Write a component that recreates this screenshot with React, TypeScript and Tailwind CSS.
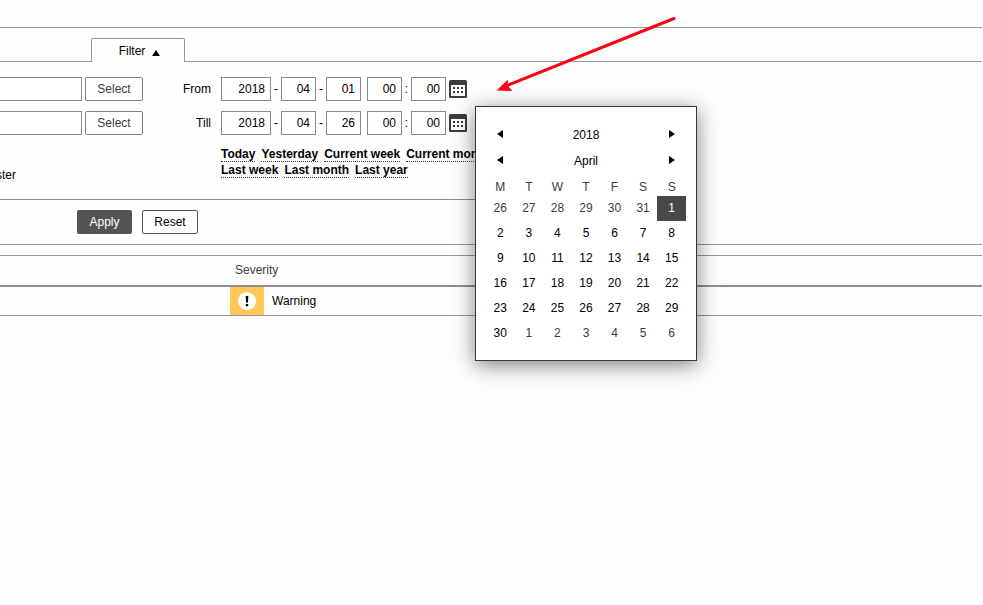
const quickRanges = [
  ["Today", "Yesterday", "Current week", "Current month"],
  ["Last week", "Last month", "Last year"],
];

const weekdays = ["M", "T", "W", "T", "F", "S", "S"];

const weeks = [
  [26, 27, 28, 29, 30, 31, 1],
  [2, 3, 4, 5, 6, 7, 8],
  [9, 10, 11, 12, 13, 14, 15],
  [16, 17, 18, 19, 20, 21, 22],
  [23, 24, 25, 26, 27, 28, 29],
  [30, 1, 2, 3, 4, 5, 6],
];

function CalendarIcon() {
  return (
    <svg width="18" height="18" viewBox="0 0 18 18" aria-hidden="true">
      <rect width="18" height="18" rx="1.5" fill="#3c3c3c" />
      <rect x="2" y="5" width="14" height="11" fill="#fff" />
      {[4, 8, 12].map((x) =>
        [7, 11].map((y) => <rect key={`${x}-${y}`} x={x} y={y} width="2" height="2" fill="#3c3c3c" />),
      )}
    </svg>
  );
}

function SelectRow({ label }: { label: string }) {
  return (
    <div className="flex gap-[3px]">
      <input
        aria-label={label}
        className="h-6 w-[82px] border border-l-0 border-[#8a8a8a] bg-white px-1 outline-none"
      />
      <button className="h-6 w-[58px] rounded-xs border border-[#7f7f7f] bg-white text-[#3c3c3c]">
        Select
      </button>
    </div>
  );
}

function DateField({ label, value, wide }: { label: string; value: string; wide?: boolean }) {
  return (
    <input
      aria-label={label}
      defaultValue={value}
      className={`h-6 border border-[#8a8a8a] bg-white px-[5px] text-right outline-none ${
        wide ? "w-[50px]" : "w-[35px]"
      }`}
    />
  );
}

function DateRow({ label, day }: { label: string; day: string }) {
  const id = label.toLowerCase();
  return (
    <div className="flex h-6 items-center">
      <span id={id} className="mr-[10px] w-[68px] text-right">
        {label}
      </span>
      <div role="group" aria-labelledby={id} className="flex items-center">
        <DateField label={`${label} year`} value="2018" wide />
        <span className="w-[10px] text-center">-</span>
        <DateField label={`${label} month`} value="04" />
        <span className="w-[10px] text-center">-</span>
        <DateField label={`${label} day`} value={day} />
        <span className="w-[6px]" />
        <DateField label={`${label} hour`} value="00" />
        <span className="w-[9px] text-center">:</span>
        <DateField label={`${label} minute`} value="00" />
        <button aria-label={`${label} calendar`} className="ml-[3px]">
          <CalendarIcon />
        </button>
      </div>
    </div>
  );
}

function Stepper({ label, value }: { label: string; value: string }) {
  return (
    <div className="flex h-[26px] items-center justify-between">
      <button aria-label={`Previous ${label}`} className="flex w-7 justify-center pb-[2px]">
        <svg width="6" height="8" viewBox="0 0 6 8" aria-hidden="true">
          <path d="M6 0v8L0 4z" />
        </svg>
      </button>
      <span>{value}</span>
      <button aria-label={`Next ${label}`} className="flex w-7 justify-center pb-[2px]">
        <svg width="6" height="8" viewBox="0 0 6 8" aria-hidden="true">
          <path d="M0 0v8l6-4z" />
        </svg>
      </button>
    </div>
  );
}

function Calendar() {
  return (
    <div className="absolute top-[106px] left-[475px] w-[222px] border border-[#383838] bg-white px-[10px] pt-[15px] pb-[14px] shadow-[0_4px_20px_rgba(0,0,0,0.5)]">
      <Stepper label="year" value="2018" />
      <Stepper label="month" value="April" />
      <table className="w-full table-fixed border-collapse text-center">
        <thead>
          <tr className="h-[22px] text-[#3c3c3c]">
            {weekdays.map((day, i) => (
              <th key={i} className="p-0 pt-1 font-normal">
                {day}
              </th>
            ))}
          </tr>
        </thead>
        <tbody>
          {weeks.map((week, w) => (
            <tr key={w}>
              {week.map((day, d) => {
                const selected = w === 0 && day === 1;
                const outside = (w === 0 && day > 7) || (w === 5 && day < 7);
                return (
                  <td key={d} className="p-0">
                    <button
                      className={`block h-[25px] w-full pb-[2px] ${
                        selected ? "bg-[#484848] text-white" : outside ? "text-[#3c3c3c]" : "text-black"
                      }`}
                    >
                      {day}
                    </button>
                  </td>
                );
              })}
            </tr>
          ))}
        </tbody>
      </table>
    </div>
  );
}

function Arrow() {
  return (
    <svg
      className="pointer-events-none absolute top-[10px] left-[490px]"
      width="190"
      height="86"
      viewBox="0 0 190 86"
      aria-hidden="true"
    >
      <path d="M184 8.500 16 76" stroke="#ff0014" strokeWidth="3" strokeLinecap="round" />
      <path d="M6.500 80.500 18 69.500 17.500 75.500 22.500 81z" fill="#ff0014" />
    </svg>
  );
}

export default function App() {
  return (
    <div className="relative min-h-screen overflow-x-hidden bg-[#fefefe] pt-[27px] font-['Liberation_Sans',Arial,sans-serif] text-[12px] leading-4 text-black">
      <main className="mr-px">
        <section className="border-y border-[#979797]">
          <div className="flex pt-[10px]">
            <div className="w-[91px] border-b border-[#979797]" />
            <button className="flex h-6 w-[94px] items-center justify-center gap-[7px] rounded-t-xs border border-b-0 border-[#979797] pl-[3px]">
              Filter
              <svg className="mt-1" width="8" height="6" viewBox="0 0 8 6" aria-hidden="true">
                <path d="M4 0 8 6H0z" />
              </svg>
            </button>
            <div className="flex-1 border-b border-[#979797]" />
          </div>

          <form className="max-w-[600px]" onSubmit={(e) => e.preventDefault()}>
            <div className="flex border-b border-[#8a8a8a] pt-[15px] pb-4">
              <div className="flex w-[143px] flex-col gap-[10px]">
                <SelectRow label="Host groups" />
                <SelectRow label="Hosts" />
                <span className="mt-[22px] -ml-1">ster</span>
              </div>
              <div className="flex flex-col gap-[10px]">
                <DateRow label="From" day="01" />
                <DateRow label="Till" day="26" />
                <div className="ml-[78px] pt-px">
                  {quickRanges.map((row) => (
                    <div key={row[0]} className="flex h-4 gap-[6px] font-bold whitespace-nowrap">
                      {row.map((name) => (
                        <a
                          key={name}
                          href="#"
                          className="h-4 border-b border-dotted border-[#3c3c3c]"
                        >
                          {name}
                        </a>
                      ))}
                    </div>
                  ))}
                </div>
              </div>
            </div>
            <div className="flex gap-[10px] py-[10px] pl-[77px]">
              <button className="h-6 w-[55px] rounded-xs bg-[#545454] text-white">Apply</button>
              <button className="h-6 w-[56px] rounded-xs border border-[#545454] bg-white">Reset</button>
            </div>
          </form>
        </section>

        <table className="mt-[10px] w-full table-fixed border-collapse text-left">
          <thead>
            <tr className="border-t border-b-2 border-t-[#979797] border-b-[#8f8f8f]">
              <th className="h-[30px] w-[230px] p-0" />
              <th className="p-0 pl-[5px] font-normal text-[#3c3c3c]">Severity</th>
            </tr>
          </thead>
          <tbody>
            <tr className="border-b border-[#979797]">
              <td className="p-0" />
              <td className="p-0">
                <div className="flex items-center gap-2">
                  <span className="flex h-7 w-[34px] items-center justify-center bg-[#ffc859]">
                    <svg width="18" height="18" viewBox="0 0 18 18" aria-hidden="true">
                      <circle cx="9" cy="9" r="9" fill="#fff" />
                      <path d="M7.700 4h2.600l-.3 6.500H8zM7.800 12h2.400v2.200H7.800z" />
                    </svg>
                  </span>
                  Warning
                </div>
              </td>
            </tr>
          </tbody>
        </table>
      </main>

      <Calendar />
      <Arrow />
    </div>
  );
}
